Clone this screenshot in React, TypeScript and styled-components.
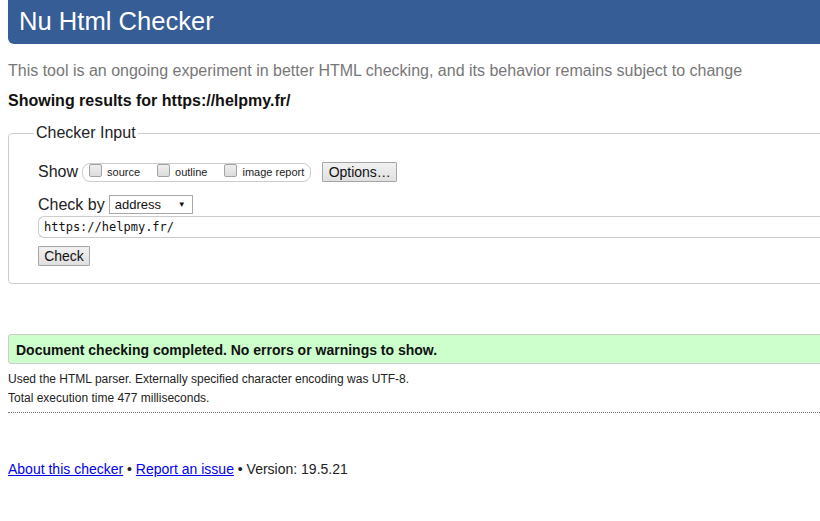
import React from "react";
import styled, { createGlobalStyle } from "styled-components";

const Global = createGlobalStyle`
  html { overflow: hidden; }
  body {
    margin: 0;
    background: #fff;
    font-family: "Liberation Sans", Arial, sans-serif;
    color: #000;
  }
`;

const Page = styled.div`
  width: 1200px;
  padding: 0 8px;
  box-sizing: content-box;
`;

const Header = styled.h1`
  margin: 0;
  height: 44px;
  background: #365d95;
  border-radius: 0 0 0 6px;
  color: #fff;
  font-weight: normal;
  font-size: 25.6px;
  line-height: 42px;
  padding-left: 11px;
`;

const Intro = styled.p`
  margin: 17px 0 0;
  font-size: 16px;
  line-height: 20px;
  color: #777;
`;

const Results = styled.p`
  margin: 10px 0 0;
  font-size: 16px;
  line-height: 20px;
  font-weight: bold;
  color: #111;
`;

const Fieldset = styled.fieldset`
  margin: 13px 0 0;
  border: 1px solid #ccc;
  border-radius: 4px;
  padding: 0 0 17px 29px;
  min-width: 0;
`;

const Legend = styled.legend`
  font-size: 16px;
  line-height: 18px;
  padding: 0 2px;
  margin-left: -4px;
  color: #222;
`;

const Form = styled.div`
  display: flex;
  flex-direction: column;
  align-items: flex-start;
  padding-top: 20px;
`;

const Row = styled.div<{ $mt?: number }>`
  display: flex;
  align-items: center;
  margin-top: ${(p) => p.$mt ?? 0}px;
`;

const Label = styled.span`
  font-size: 16px;
  line-height: 18px;
  color: #222;
  margin-right: 4px;
`;

const Group = styled.div`
  display: flex;
  align-items: center;
  height: 17px;
  border: 1px solid #ccc;
  border-radius: 8px;
  padding: 0 6px 0 6px;
  margin-right: 11px;
`;

const Opt = styled.label<{ $mr?: number }>`
  display: flex;
  align-items: center;
  font-size: 11px;
  line-height: 13px;
  color: #222;
  margin-right: ${(p) => p.$mr ?? 0}px;
`;

const Box = styled.span`
  display: inline-block;
  width: 11px;
  height: 11px;
  border: 1px solid #a3a3a3;
  border-radius: 2px;
  background: linear-gradient(#eeeeee, #dcdcdc);
  margin-right: 5px;
  transform: translateY(-2px);
`;

const Button = styled.button<{ $w: number }>`
  width: ${(p) => p.$w}px;
  height: 20px;
  padding: 0;
  border: 1px solid #a5a5a5;
  border-radius: 1px;
  background: linear-gradient(#f1f1f1, #e0e0e0);
  font-family: "Liberation Sans", Arial, sans-serif;
  font-size: 14px;
  line-height: 18px;
  color: #111;
`;

const Select = styled.div`
  display: flex;
  align-items: center;
  justify-content: space-between;
  width: 84px;
  height: 19px;
  box-sizing: border-box;
  border: 1px solid #a9a9a9;
  padding: 0 6px 0 5px;
  font-size: 13px;
  color: #111;
  background: #fff;
`;

const Arrow = styled.span`
  font-size: 8px;
  color: #111;
`;

const UrlInput = styled.div`
  align-self: stretch;
  height: 22px;
  box-sizing: border-box;
  border: 1px solid #ccc;
  border-right: none;
  border-radius: 6px 0 0 6px;
  margin-top: 2px;
  padding-left: 5px;
  font-family: "DejaVu Sans Mono", "Liberation Mono", monospace;
  font-size: 12px;
  color: #111;
  display: flex;
  align-items: center;
`;

const Success = styled.div`
  margin-top: 50px;
  border: 1px solid #ccc;
  border-radius: 3px;
  background: #ccffcc;
  padding: 7px 7px 5px;
  font-size: 14px;
  line-height: 16px;
  font-weight: bold;
  color: #111;
`;

const Details = styled.div`
  margin-top: 6px;
  padding-bottom: 4px;
  border-bottom: 1px dotted #777;
`;

const Detail = styled.p`
  margin: 0;
  font-size: 12px;
  line-height: 19px;
  color: #222;
`;

const Footer = styled.p`
  margin: 48px 0 0;
  font-size: 14px;
  line-height: 16px;
  color: #222;
`;

const Link = styled.a`
  color: #0000ee;
  text-decoration: underline;
`;

export default function App() {
  return (
    <>
      <Global />
      <Page>
        <Header>Nu Html Checker</Header>
        <Intro>
          This tool is an ongoing experiment in better HTML checking, and its behavior remains subject to change
        </Intro>
        <Results>Showing results for https://helpmy.fr/</Results>
        <Fieldset>
          <Legend>Checker Input</Legend>
          <Form>
            <Row>
              <Label>Show</Label>
              <Group>
                <Opt $mr={17}>
                  <Box />
                  source
                </Opt>
                <Opt $mr={17}>
                  <Box />
                  outline
                </Opt>
                <Opt>
                  <Box />
                  image report
                </Opt>
              </Group>
              <Button $w={75}>Options…</Button>
            </Row>
            <Row $mt={13}>
              <Label>Check by</Label>
              <Select>
                <span>address</span>
                <Arrow>▼</Arrow>
              </Select>
            </Row>
            <UrlInput>https://helpmy.fr/</UrlInput>
            <Row $mt={8}>
              <Button $w={52}>Check</Button>
            </Row>
          </Form>
        </Fieldset>
        <Success>Document checking completed. No errors or warnings to show.</Success>
        <Details>
          <Detail>Used the HTML parser. Externally specified character encoding was UTF-8.</Detail>
          <Detail>Total execution time 477 milliseconds.</Detail>
        </Details>
        <Footer>
          <Link href="#">About this checker</Link> • <Link href="#">Report an issue</Link> • Version: 19.5.21
        </Footer>
      </Page>
    </>
  );
}
